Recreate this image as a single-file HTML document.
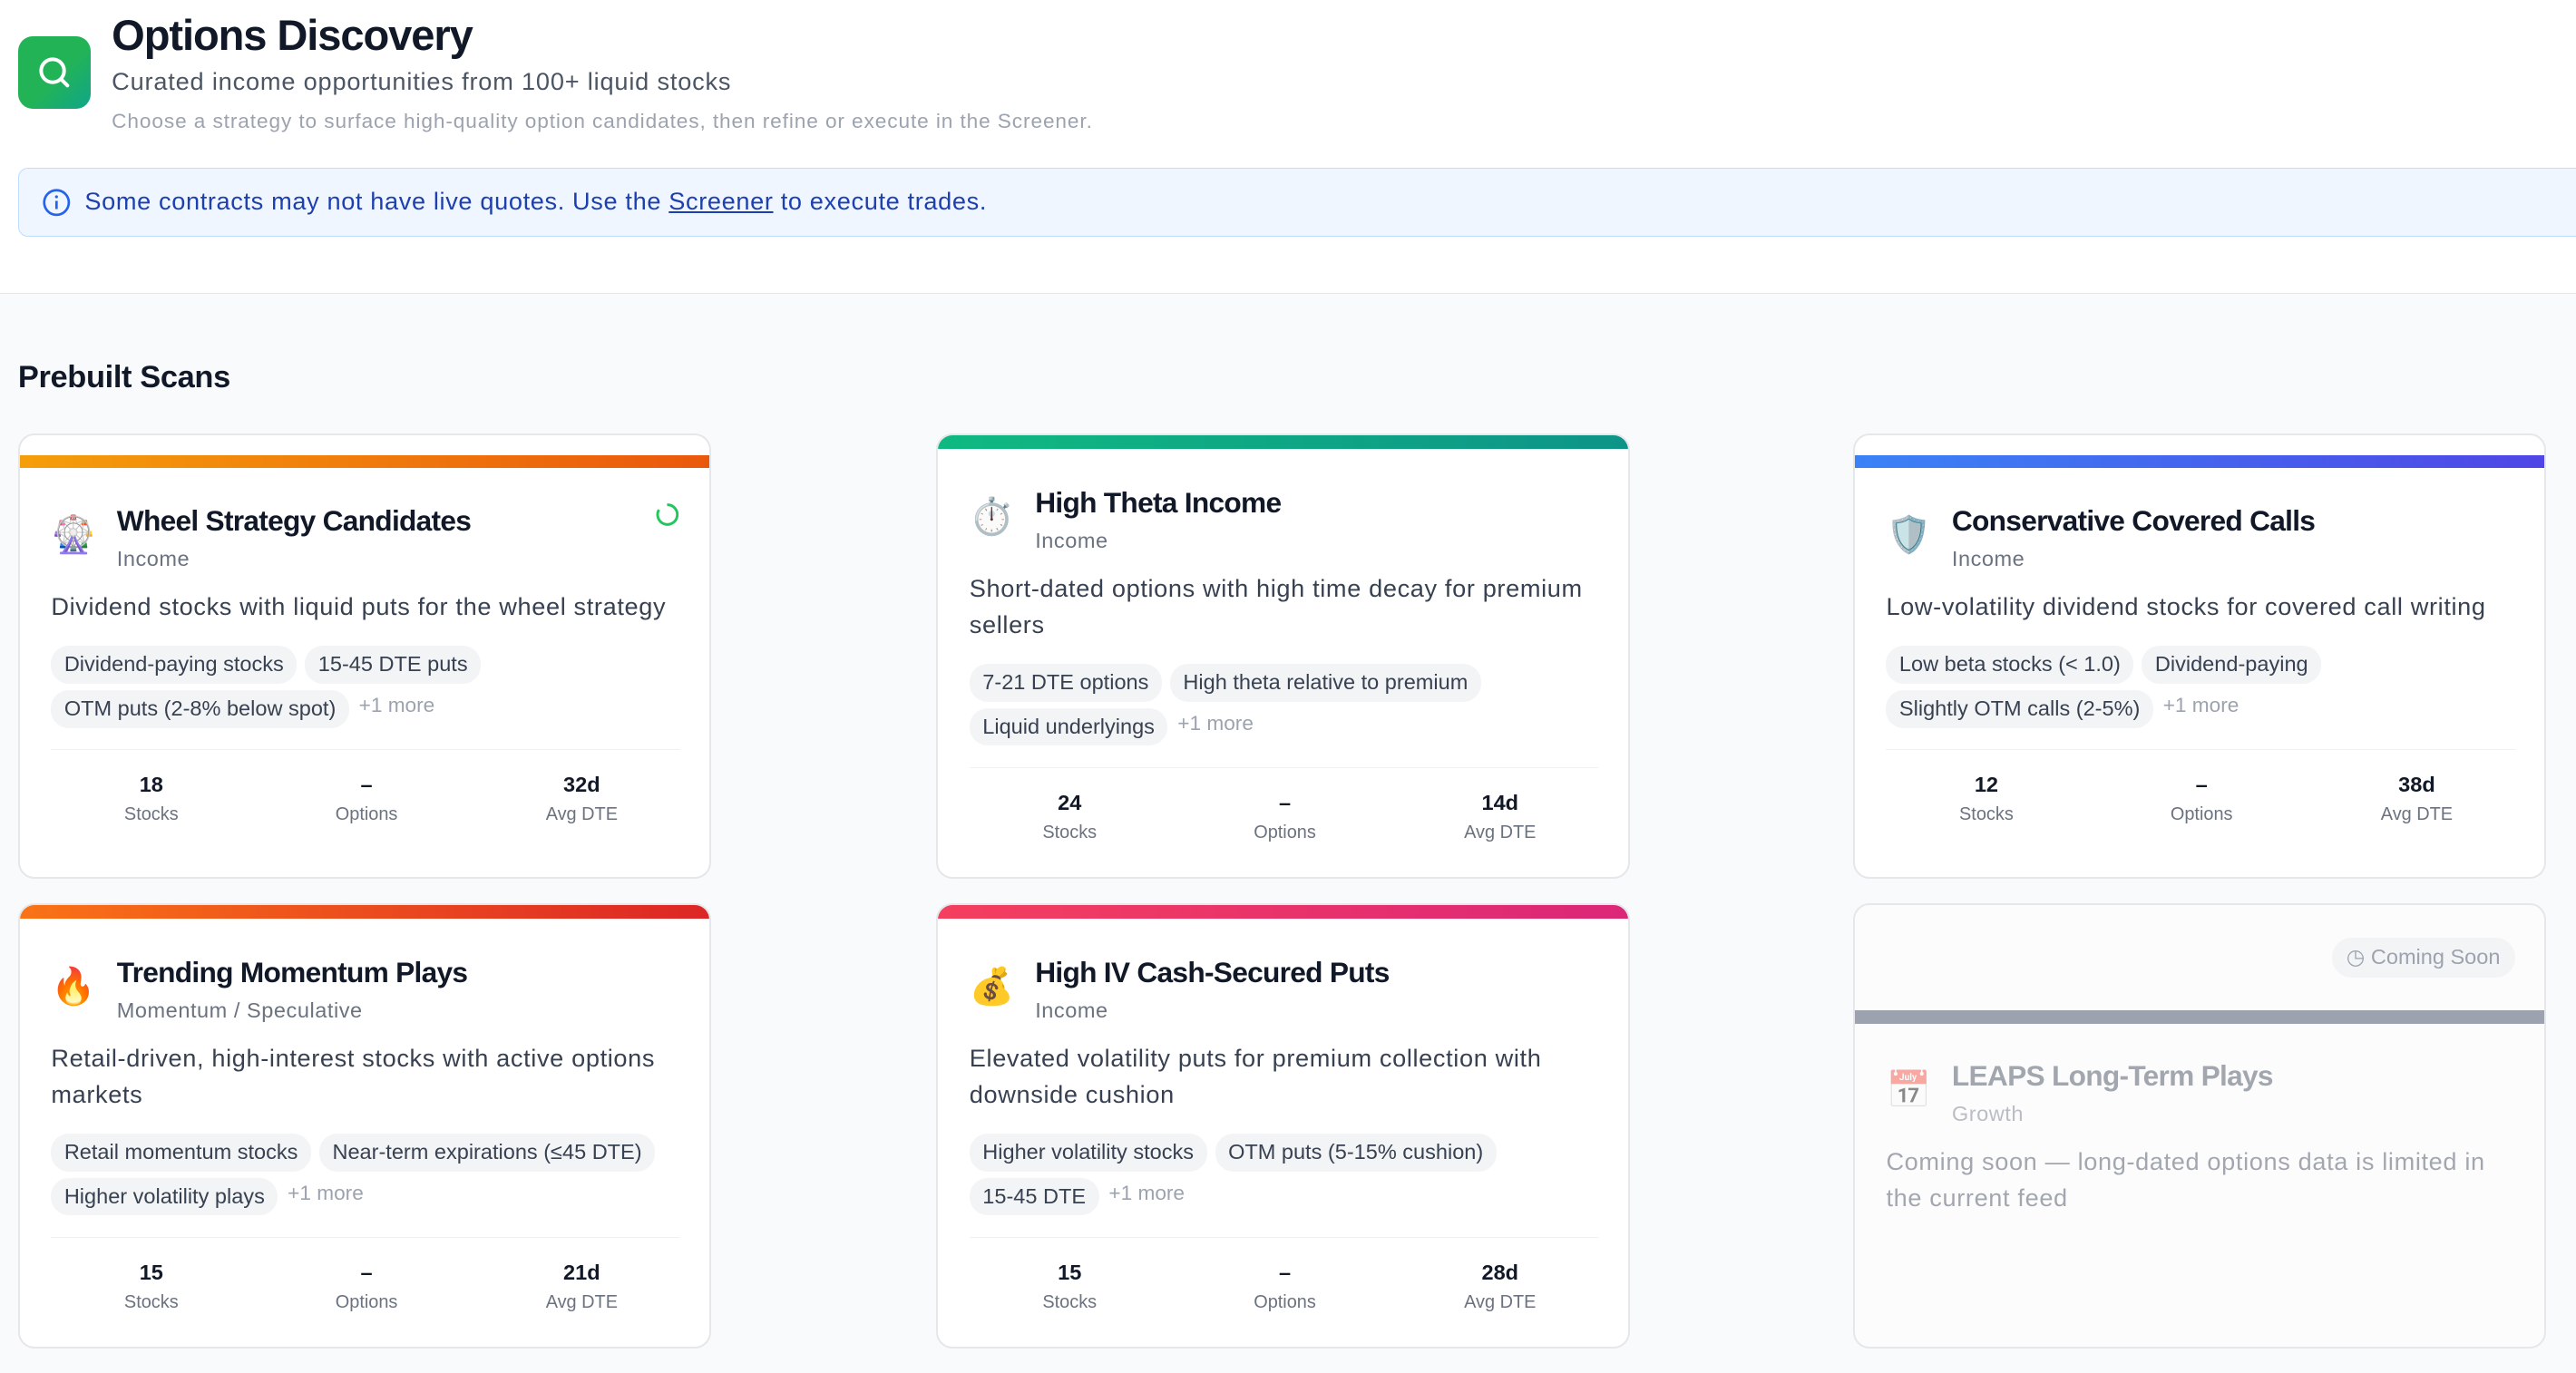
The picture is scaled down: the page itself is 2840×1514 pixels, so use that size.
<!DOCTYPE html>
<html><head><meta charset="utf-8"><style>
*{box-sizing:border-box;margin:0;padding:0}
html,body{width:2840px;height:1514px;overflow:hidden;background:#f8fafc}
#w{zoom:1.8112;width:1568px;height:836px;position:relative;font-family:"Liberation Sans",sans-serif;color:#111827}
.top{position:absolute;left:0;top:0;width:1568px;height:179px;background:#fff;border-bottom:1px solid #e5e7eb}
.logo{position:absolute;left:11px;top:22px;width:44px;height:44px;border-radius:9px;background:linear-gradient(135deg,#22b357 55%,#10a58a)}
h1{position:absolute;left:68px;top:6px;font-size:26px;font-weight:700;letter-spacing:-0.6px}
.sub{position:absolute;left:68px;top:41px;font-size:15px;color:#4b5563;letter-spacing:0.45px}
.sub2{position:absolute;left:68px;top:67px;font-size:12.5px;color:#9ca3af;letter-spacing:0.5px}
.alert{position:absolute;left:11px;top:102px;width:1570px;height:42px;background:#eff6ff;border:1px solid #bfdbfe;border-radius:6px;font-size:15px;color:#1e40af;padding:11px 0 0 40px;letter-spacing:0.35px}
.alert a{color:#1e40af;text-decoration:underline}
.alert svg{position:absolute;left:14px;top:12px}
h2{position:absolute;left:11px;top:219px;font-size:19px;font-weight:700;letter-spacing:-0.2px}
.card{position:absolute;width:422px;height:271px;background:#fff;border:1.5px solid #e5e7eb;border-radius:10px;overflow:hidden}
.bar{position:absolute;left:0;right:0;height:8px}
.c{position:absolute;left:19px;right:18px}
.ic{position:absolute;left:0;width:26px;height:26px;font-size:22px;line-height:26px;text-align:center}
.tt{position:absolute;left:40px;font-size:17.5px;font-weight:700;letter-spacing:-0.4px;white-space:nowrap}
.ct{position:absolute;left:40px;font-size:13px;color:#6b7280;letter-spacing:0.3px}
.d{position:absolute;left:0;right:0;font-size:15px;color:#374151;line-height:22px;letter-spacing:0.35px}
.tags{position:absolute;left:0;right:-4px;display:flex;flex-wrap:wrap;gap:4px 5px;align-items:center}
.tg{background:#f3f4f6;border-radius:11px;height:23px;line-height:23px;padding:0 8px;font-size:13px;color:#374151;white-space:nowrap}
.mr{font-size:12.5px;color:#9ca3af;margin-left:1px;margin-top:-4px}
.st{position:absolute;left:0;right:0;border-top:1px solid #f0f1f3;height:50px}
.s{position:absolute;width:100px;text-align:center;top:14px}
.s b{display:block;font-size:13px;font-weight:700;color:#111827}
.s span{display:block;font-size:11px;color:#6b7280;margin-top:4px}
</style></head><body><div id="w">
<div class="top">
<div class="logo"><svg width="44" height="44" viewBox="0 0 44 44"><circle cx="21" cy="21" r="7" fill="none" stroke="#fff" stroke-width="2.2"/><line x1="26" y1="26" x2="30" y2="30" stroke="#fff" stroke-width="2.2" stroke-linecap="round"/></svg></div>
<h1>Options Discovery</h1>
<div class="sub">Curated income opportunities from 100+ liquid stocks</div>
<div class="sub2">Choose a strategy to surface high-quality option candidates, then refine or execute in the Screener.</div>
<div class="alert"><svg width="18" height="18" viewBox="0 0 18 18"><circle cx="9" cy="9" r="7.5" fill="none" stroke="#2563eb" stroke-width="1.5"/><line x1="9" y1="8" x2="9" y2="13" stroke="#2563eb" stroke-width="1.5"/><circle cx="9" cy="5.5" r="0.9" fill="#2563eb"/></svg>Some contracts may not have live quotes. Use the <a>Screener</a> to execute trades.</div>
</div>
<h2>Prebuilt Scans</h2>

<div class="card" style="left:11px;top:264px">
<div class="bar" style="top:12px;background:linear-gradient(90deg,#f59e0b,#ea580c)"></div>
<svg style="position:absolute;left:386px;top:40px" width="16" height="16" viewBox="0 0 16 16"><path d="M8 2 A6 6 0 1 1 3 5" fill="none" stroke="#22c55e" stroke-width="1.6"/></svg>
<div class="c" style="top:40px">
<div class="ic" style="top:8px">🎡</div>
<div class="tt" style="top:2px">Wheel Strategy Candidates</div>
<div class="ct" style="top:28px">Income</div>
<div class="d" style="top:53px">Dividend stocks with liquid puts for the wheel strategy</div>
<div class="tags" style="top:88px"><span class="tg">Dividend-paying stocks</span><span class="tg">15-45 DTE puts</span><span class="tg">OTM puts (2-8% below spot)</span><span class="mr">+1 more</span></div>
<div class="st" style="top:151px"><div class="s" style="left:11px"><b>18</b><span>Stocks</span></div><div class="s" style="left:142px"><b>–</b><span>Options</span></div><div class="s" style="left:273px"><b>32d</b><span>Avg DTE</span></div></div>
</div></div>

<div class="card" style="left:570px;top:264px">
<div class="bar" style="top:0;background:linear-gradient(90deg,#10b981,#0d9488)"></div>
<div class="c" style="top:29px">
<div class="ic" style="top:8px">⏱️</div>
<div class="tt" style="top:2px">High Theta Income</div>
<div class="ct" style="top:28px">Income</div>
<div class="d" style="top:53px">Short-dated options with high time decay for premium sellers</div>
<div class="tags" style="top:110px"><span class="tg">7-21 DTE options</span><span class="tg">High theta relative to premium</span><span class="tg">Liquid underlyings</span><span class="mr">+1 more</span></div>
<div class="st" style="top:173px"><div class="s" style="left:11px"><b>24</b><span>Stocks</span></div><div class="s" style="left:142px"><b>–</b><span>Options</span></div><div class="s" style="left:273px"><b>14d</b><span>Avg DTE</span></div></div>
</div></div>

<div class="card" style="left:1128px;top:264px">
<div class="bar" style="top:12px;background:linear-gradient(90deg,#3b82f6,#4f46e5)"></div>
<div class="c" style="top:40px">
<div class="ic" style="top:8px">🛡️</div>
<div class="tt" style="top:2px">Conservative Covered Calls</div>
<div class="ct" style="top:28px">Income</div>
<div class="d" style="top:53px">Low-volatility dividend stocks for covered call writing</div>
<div class="tags" style="top:88px"><span class="tg">Low beta stocks (&lt; 1.0)</span><span class="tg">Dividend-paying</span><span class="tg">Slightly OTM calls (2-5%)</span><span class="mr">+1 more</span></div>
<div class="st" style="top:151px"><div class="s" style="left:11px"><b>12</b><span>Stocks</span></div><div class="s" style="left:142px"><b>–</b><span>Options</span></div><div class="s" style="left:273px"><b>38d</b><span>Avg DTE</span></div></div>
</div></div>

<div class="card" style="left:11px;top:550px">
<div class="bar" style="top:0;background:linear-gradient(90deg,#f97316,#dc2626)"></div>
<div class="c" style="top:29px">
<div class="ic" style="top:8px">🔥</div>
<div class="tt" style="top:2px">Trending Momentum Plays</div>
<div class="ct" style="top:28px">Momentum / Speculative</div>
<div class="d" style="top:53px">Retail-driven, high-interest stocks with active options markets</div>
<div class="tags" style="top:110px"><span class="tg">Retail momentum stocks</span><span class="tg">Near-term expirations (≤45 DTE)</span><span class="tg">Higher volatility plays</span><span class="mr">+1 more</span></div>
<div class="st" style="top:173px"><div class="s" style="left:11px"><b>15</b><span>Stocks</span></div><div class="s" style="left:142px"><b>–</b><span>Options</span></div><div class="s" style="left:273px"><b>21d</b><span>Avg DTE</span></div></div>
</div></div>

<div class="card" style="left:570px;top:550px">
<div class="bar" style="top:0;background:linear-gradient(90deg,#f43f5e,#db2777)"></div>
<div class="c" style="top:29px">
<div class="ic" style="top:8px">💰</div>
<div class="tt" style="top:2px">High IV Cash-Secured Puts</div>
<div class="ct" style="top:28px">Income</div>
<div class="d" style="top:53px">Elevated volatility puts for premium collection with downside cushion</div>
<div class="tags" style="top:110px"><span class="tg">Higher volatility stocks</span><span class="tg">OTM puts (5-15% cushion)</span><span class="tg">15-45 DTE</span><span class="mr">+1 more</span></div>
<div class="st" style="top:173px"><div class="s" style="left:11px"><b>15</b><span>Stocks</span></div><div class="s" style="left:142px"><b>–</b><span>Options</span></div><div class="s" style="left:273px"><b>28d</b><span>Avg DTE</span></div></div>
</div></div>

<div class="card" style="left:1128px;top:550px;background:#fcfcfd">
<div style="position:absolute;right:18px;top:20px;height:24px;line-height:24px;padding:0 9px;border-radius:12px;background:#f3f4f6;font-size:13px;color:#9ca3af">◷ Coming Soon</div>
<div class="bar" style="top:64px;background:#9ca3af"></div>
<div class="c" style="top:92px;opacity:.45">
<div class="ic" style="top:8px">📅</div>
<div class="tt" style="top:2px;color:#374151">LEAPS Long-Term Plays</div>
<div class="ct" style="top:28px">Growth</div>
<div class="d" style="top:53px">Coming soon — long-dated options data is limited in the current feed</div>
</div></div>
</div></body></html>
